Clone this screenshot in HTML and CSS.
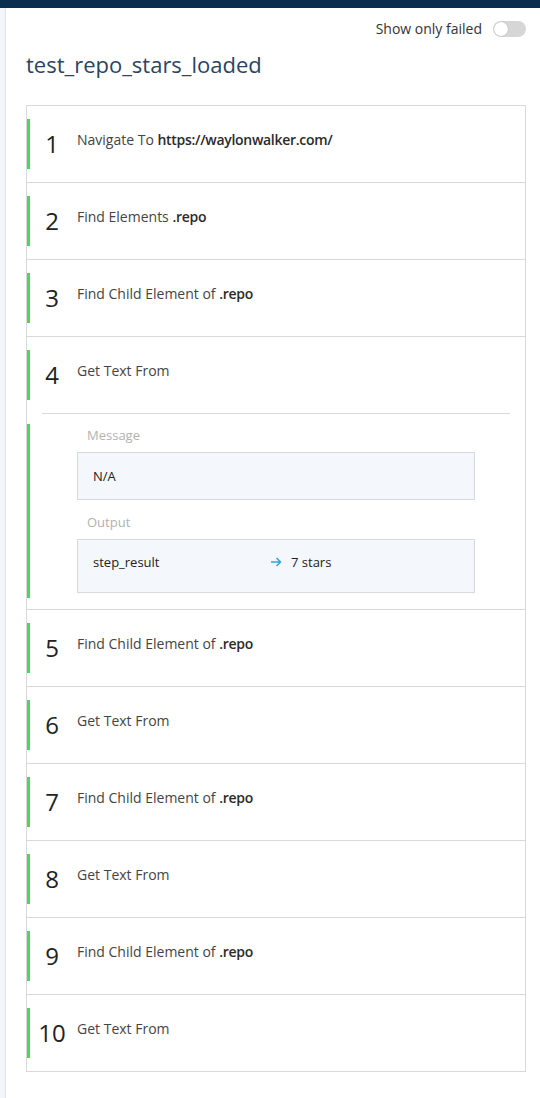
FILE: index.html
```html
<!DOCTYPE html>
<html>
<head>
<meta charset="utf-8">
<link rel="stylesheet" href="styles.css">
</head>
<body>
<div class="topbar"></div>
<div class="layout">
  <div class="sidebar"></div>
  <main class="main">
    <div class="toolbar">
      <span class="toggle-label">Show only failed</span>
      <span class="toggle"><span class="knob"></span></span>
    </div>
    <h1 class="title">test_repo_stars_loaded</h1>
    <div class="card">
      <div class="row">
        <div class="step"><div class="num">1</div><div class="text">Navigate To <b>https://waylonwalker.com/</b></div></div>
      </div>
      <div class="row">
        <div class="step"><div class="num">2</div><div class="text">Find Elements <b>.repo</b></div></div>
      </div>
      <div class="row">
        <div class="step"><div class="num">3</div><div class="text">Find Child Element of <b>.repo</b></div></div>
      </div>
      <div class="row expanded">
        <div class="row-head">
          <div class="step"><div class="num">4</div><div class="text">Get Text From</div></div>
        </div>
        <div class="detail">
          <div class="detail-body">
            <div class="label">Message</div>
            <div class="box msg">N/A</div>
            <div class="label">Output</div>
            <div class="box out">
              <span class="out-name">step_result</span>
              <span class="out-arrow"><svg width="12" height="12" viewBox="0 0 12 12"><path d="M1 6H10.5M6.5 2L10.5 6L6.5 10" fill="none" stroke="#2aa6e0" stroke-width="1.5"/></svg></span>
              <span class="out-value">7 stars</span>
            </div>
          </div>
        </div>
      </div>
      <div class="row">
        <div class="step"><div class="num">5</div><div class="text">Find Child Element of <b>.repo</b></div></div>
      </div>
      <div class="row">
        <div class="step"><div class="num">6</div><div class="text">Get Text From</div></div>
      </div>
      <div class="row">
        <div class="step"><div class="num">7</div><div class="text">Find Child Element of <b>.repo</b></div></div>
      </div>
      <div class="row">
        <div class="step"><div class="num">8</div><div class="text">Get Text From</div></div>
      </div>
      <div class="row">
        <div class="step"><div class="num">9</div><div class="text">Find Child Element of <b>.repo</b></div></div>
      </div>
      <div class="row">
        <div class="step"><div class="num">10</div><div class="text">Get Text From</div></div>
      </div>
    </div>
  </main>
</div>
</body>
</html>
```
FILE: styles.css
```css
* { box-sizing: border-box; }
html, body { margin: 0; padding: 0; background: #fff; }
body {
  font-family: "Open Sans", "Noto Sans", sans-serif;
  color: #444;
  height: 1098px;
  overflow: hidden;
}
.topbar { height: 8px; background: #0b2d50; }
.layout { display: flex; min-height: 1090px; }
.sidebar {
  width: 6px;
  background: #f3f7fc;
  border-right: 1px solid #dfe4ea;
  flex: none;
}
.main { flex: 1; padding: 12px 14px 0 20px; }
.toolbar {
  display: flex;
  justify-content: flex-end;
  align-items: center;
  height: 18px;
  gap: 11px;
}
.toggle-label { font-size: 14px; line-height: 18px; color: #333; }
.toggle {
  width: 33px;
  height: 16px;
  border-radius: 8px;
  background: #d6d6d6;
  display: flex;
  align-items: center;
  padding: 1px;
}
.knob {
  width: 14px;
  height: 14px;
  border-radius: 50%;
  background: #fff;
  box-shadow: 0 0 1px rgba(0,0,0,0.3);
}
.title {
  margin: 11px 0 26px 0;
  font-size: 22px;
  line-height: 30px;
  font-weight: 400;
  color: #2b455f;
}
.card { border: 1px solid #d9d9d9; }
.row + .row { border-top: 1px solid #d9d9d9; }
.row { padding: 13px 0; }
.row.expanded { padding: 0; }
.row-head { padding: 13px 0; margin: 0 15px; border-bottom: 1px solid #d9d9d9; }
.row-head .step { margin-left: -15px; }
.step {
  display: flex;
  align-items: center;
  height: 50px;
  border-left: 3px solid #4cd660;
}
.num {
  width: 44px;
  text-align: center;
  font-size: 24px;
  line-height: 24px;
  color: #222;
  flex: none;
}
.text {
  align-self: flex-start;
  padding-top: 11px;
  margin-left: 3px;
  font-size: 14px;
  line-height: 20px;
  color: #444;
}
.text b { font-weight: 600; color: #2a2a2a; letter-spacing: -0.3px; }
.detail { padding: 10px 0 11px 0; }
.detail-body {
  border-left: 3px solid #4cd660;
  padding: 1px 50px 5px 47px;
}
.label {
  font-size: 13px;
  line-height: 20px;
  color: #b2b2b2;
  margin: 0 0 7px 10px;
}
.box {
  background: #f4f7fb;
  border: 1px solid #d6d9dd;
  font-size: 13px;
  line-height: 20px;
  color: #222;
}
.msg { padding: 13px 15px; height: 48px; margin-bottom: 12px; }
.out { padding: 12px 15px 20px 15px; height: 54px; display: flex; align-items: flex-start; }
.out-name { width: 177px; flex: none; }
.out-arrow { width: 21px; display: flex; align-items: center; height: 20px; flex: none; }
.out-arrow svg { display: block; }
```
